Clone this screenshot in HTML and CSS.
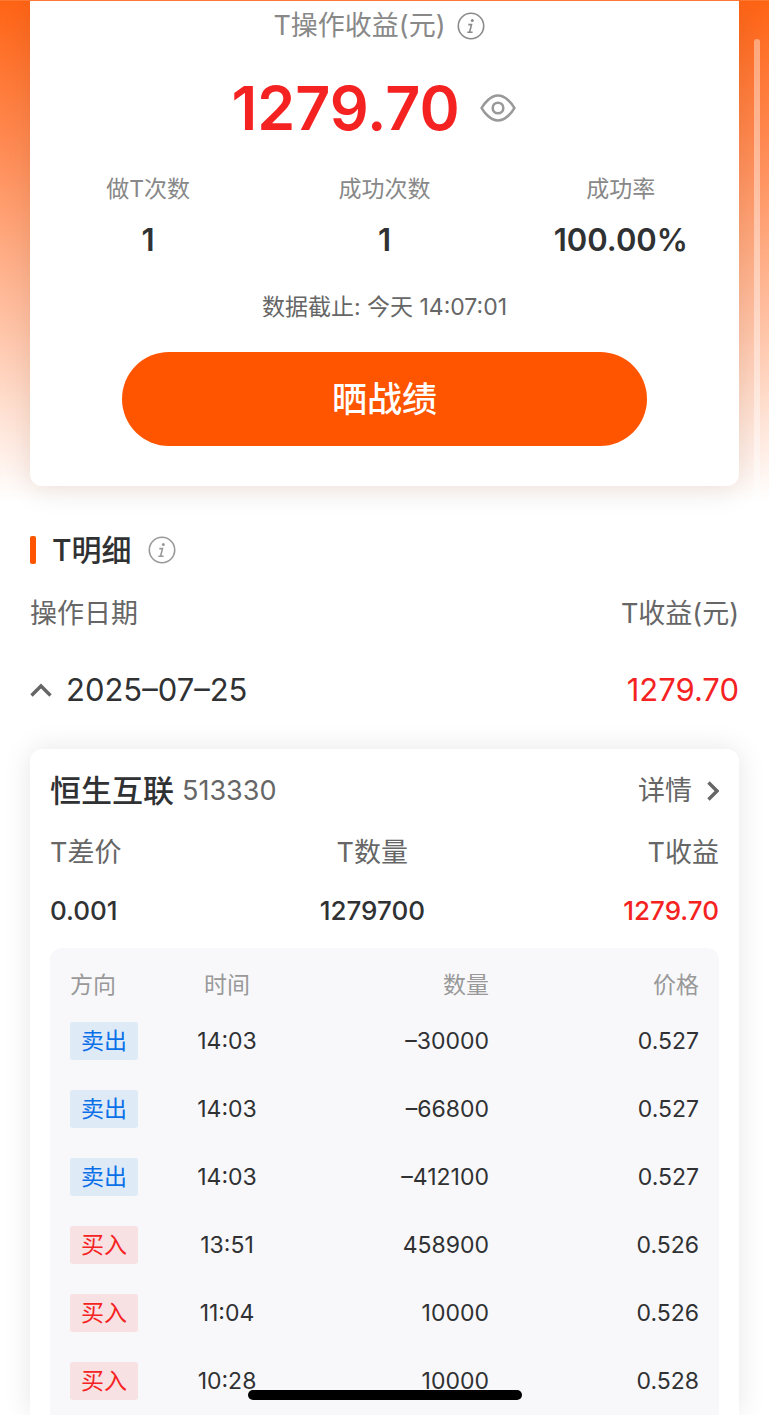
FILE: index.html
```html
<!DOCTYPE html>
<html lang="zh-CN">
<head>
<meta charset="utf-8">
<meta name="viewport" content="width=device-width, initial-scale=1">
<title>T操作收益</title>
<link rel="stylesheet" href="styles.css">
</head>
<body>
<main class="page">
  <section class="summary">
    <div class="summary-title">
      <span>T操作收益(元)</span>
      <button class="icon-button" type="button" aria-label="收益说明">
        <svg class="info-icon" viewBox="0 0 28 28"><circle cx="14" cy="14" r="12.7"/><circle class="dot" cx="15.3" cy="8.6" r="1.5"/><path d="M11.300 12.600h3.200l-1.900 7.600h3M10.300 20.200h2.300"/></svg>
      </button>
    </div>
    <div class="amount">
      <strong class="amount-value">1279.70</strong>
      <button class="icon-button" type="button" aria-label="隐藏金额">
        <svg class="eye-icon" viewBox="0 0 36 28"><path d="M1.600 14C3.500 10.500 10 1.500 18 1.500S32.500 10.500 34.400 14C32.500 17.500 26 26.500 18 26.500S3.500 17.500 1.600 14Z"/><circle cx="18" cy="14" r="5.300"/></svg>
      </button>
    </div>
    <dl class="stats">
      <div class="stat"><dt>做T次数</dt><dd>1</dd></div>
      <div class="stat"><dt>成功次数</dt><dd>1</dd></div>
      <div class="stat"><dt>成功率</dt><dd>100.00%</dd></div>
    </dl>
    <p class="updated">数据截止: 今天 14:07:01</p>
    <button class="share" type="button">晒战绩</button>
  </section>

  <section class="detail" id="detail">
    <header class="detail-title">
      <h2>T明细</h2>
      <button class="icon-button" type="button" aria-label="明细说明">
        <svg class="info-icon light" viewBox="0 0 28 28"><circle cx="14" cy="14" r="12.7"/><circle class="dot" cx="15.3" cy="8.6" r="1.5"/><path d="M11.300 12.600h3.200l-1.900 7.600h3M10.300 20.200h2.300"/></svg>
      </button>
    </header>
    <div class="list-head"><span>操作日期</span><span>T收益(元)</span></div>
    <button class="day" type="button" aria-expanded="true">
      <svg class="caret" viewBox="0 0 22 14"><path d="M1.500 12.500 11 3l9.500 9.500"/></svg>
      <span>2025–07–25</span>
      <span class="day-profit">1279.70</span>
    </button>

    <article class="stock">
      <header class="stock-head">
        <h3>恒生互联</h3>
        <span class="code">513330</span>
        <a class="more" href="#detail">详情<svg class="chevron" viewBox="0 0 12 20"><path d="M1.500 1.500 10 10l-8.500 8.500"/></svg></a>
      </header>
      <dl class="figures">
        <div><dt>T差价</dt><dd>0.001</dd></div>
        <div class="middle"><dt>T数量</dt><dd>1279700</dd></div>
        <div class="last"><dt>T收益</dt><dd class="gain">1279.70</dd></div>
      </dl>
      <div class="trades">
        <table>
          <colgroup><col class="col-side"><col class="col-time"><col><col class="col-price"></colgroup>
          <thead>
            <tr><th class="side">方向</th><th class="time">时间</th><th>数量</th><th>价格</th></tr>
          </thead>
          <tbody>
            <tr><td class="side"><span class="tag sell">卖出</span></td><td class="time">14:03</td><td>–30000</td><td>0.527</td></tr>
            <tr><td class="side"><span class="tag sell">卖出</span></td><td class="time">14:03</td><td>–66800</td><td>0.527</td></tr>
            <tr><td class="side"><span class="tag sell">卖出</span></td><td class="time">14:03</td><td>–412100</td><td>0.527</td></tr>
            <tr><td class="side"><span class="tag buy">买入</span></td><td class="time">13:51</td><td>458900</td><td>0.526</td></tr>
            <tr><td class="side"><span class="tag buy">买入</span></td><td class="time">11:04</td><td>10000</td><td>0.526</td></tr>
            <tr><td class="side"><span class="tag buy">买入</span></td><td class="time">10:28</td><td>10000</td><td>0.528</td></tr>
          </tbody>
        </table>
      </div>
    </article>
  </section>
</main>
<div class="scroll-thumb"></div>
<div class="home-indicator"></div>
</body>
</html>
```
FILE: styles.css
```css
* { box-sizing: border-box; margin: 0; padding: 0; }

body {
  background: #fff;
  color: #303133;
  font-family: Inter, "Noto Sans CJK SC", sans-serif;
  font-size: 27px;
  line-height: 40px;
}

button { border: 0; background: none; color: inherit; font: inherit; cursor: pointer; }
a { color: inherit; text-decoration: none; }
svg { display: block; fill: none; }
dt, dd { white-space: nowrap; }

.page {
  padding: 0 30px;
  border-top: 1px solid #ff7733;
  background: linear-gradient(#ff6415 0, #ff8c55 150px, #ffc3a6 325px, #fff 500px) no-repeat;
  overflow: hidden;
}

.icon-button { display: flex; }

.summary {
  padding: 5px 0 40px;
  border-radius: 0 0 12px 12px;
  background: #fff;
  box-shadow: 0 4px 28px rgba(80, 40, 20, 0.12);
}

.summary-title {
  display: flex;
  justify-content: center;
  align-items: center;
  gap: 11px;
  margin-bottom: 22px;
  padding-right: 11px;
  color: #888;
}

.info-icon { width: 28px; height: 28px; stroke: #8a8a8a; stroke-width: 1.6; }
.info-icon .dot { fill: #8a8a8a; stroke: none; }
.info-icon.light { stroke: #999; }
.info-icon.light .dot { fill: #999; }

.amount {
  display: flex;
  justify-content: center;
  align-items: center;
  gap: 20px;
  margin-bottom: 25px;
  padding-right: 22px;
  line-height: 80px;
}
.amount-value { color: #f52222; font-size: 61px; font-weight: 600; }
.eye-icon { width: 36px; height: 28px; stroke: #999; stroke-width: 2.6; }

.stats { display: grid; grid-template-columns: repeat(3, 1fr); text-align: center; }
.stat dt { margin-bottom: 15px; color: #888; font-size: 23px; line-height: 32px; }
.stat dd { font-size: 31px; font-weight: 600; }

.updated { margin: 31px 0 29px; color: #666; font-size: 23px; line-height: 32px; text-align: center; }

.share {
  display: block;
  width: 74%;
  height: 94px;
  margin: 0 auto;
  border-radius: 47px;
  background: #ff5500;
  color: #fff;
  font-size: 35px;
  font-weight: 500;
}

.detail { padding-top: 44px; }

.detail-title { display: flex; align-items: center; gap: 16px; margin-bottom: 24px; }
.detail-title h2 { display: flex; align-items: center; gap: 16px; font-size: 30px; font-weight: 500; }
.detail-title h2::before { content: ""; width: 6px; height: 28px; border-radius: 2px; background: #ff5500; }

.list-head { display: flex; justify-content: space-between; margin-bottom: 36px; color: #666; }

.day { display: flex; align-items: center; width: 100%; margin-bottom: 39px; font-size: 31px; text-align: left; }
.caret { width: 22px; height: 14px; margin-right: 14px; stroke: #666; stroke-width: 3.4; }
.day-profit { margin-left: auto; color: #f52222; }

.stock {
  padding: 22px 20px 0;
  border-radius: 12px 12px 0 0;
  background: #fff;
  box-shadow: 0 0 28px rgba(0, 0, 0, 0.1);
}
.stock-head { display: flex; align-items: center; gap: 8px; margin-bottom: 22px; }
.stock-head h3 { font-size: 31px; font-weight: 500; }
.code, .more { color: #666; }
.more { display: flex; align-items: center; gap: 15px; margin-left: auto; }
.chevron { width: 12px; height: 20px; stroke: #666; stroke-width: 3.4; }

.figures { display: flex; justify-content: space-between; margin-bottom: 17px; }
.figures dt { margin-bottom: 18px; color: #666; }
.figures dd { font-size: 26px; font-weight: 500; }
.figures .middle { text-align: center; }
.figures .last { text-align: right; }
.figures .gain { color: #f52222; }

.trades { padding: 14px 20px 0; border-radius: 12px 12px 0 0; background: #f8f8fb; }
.trades table { width: 100%; table-layout: fixed; border-collapse: collapse; font-size: 23px; }
.col-side { width: 68px; }
.col-time { width: 178px; }
.col-price { width: 210px; }
.trades th { height: 45px; color: #999; font-size: 23px; font-weight: 400; }
.trades td { height: 68px; }
.trades th, .trades td { text-align: right; vertical-align: middle; }
.trades .side { text-align: left; }
.trades .time { text-align: center; }

.tag { display: block; height: 38px; border-radius: 3px; font-size: 23px; line-height: 38px; text-align: center; }
.sell { background: #deebf7; color: #0b70e8; }
.buy { background: #f7e1e2; color: #f52222; }

/* Overlays drawn above the scrolling content */
.scroll-thumb {
  position: fixed;
  top: 39px;
  right: 9px;
  width: 6px;
  height: 520px;
  border-radius: 3px;
  background: rgba(255, 255, 255, 0.4);
}
.home-indicator {
  position: fixed;
  bottom: 16px;
  left: 50%;
  width: 274px;
  height: 10px;
  margin-left: -137px;
  border-radius: 5px;
  background: #000;
}
```
